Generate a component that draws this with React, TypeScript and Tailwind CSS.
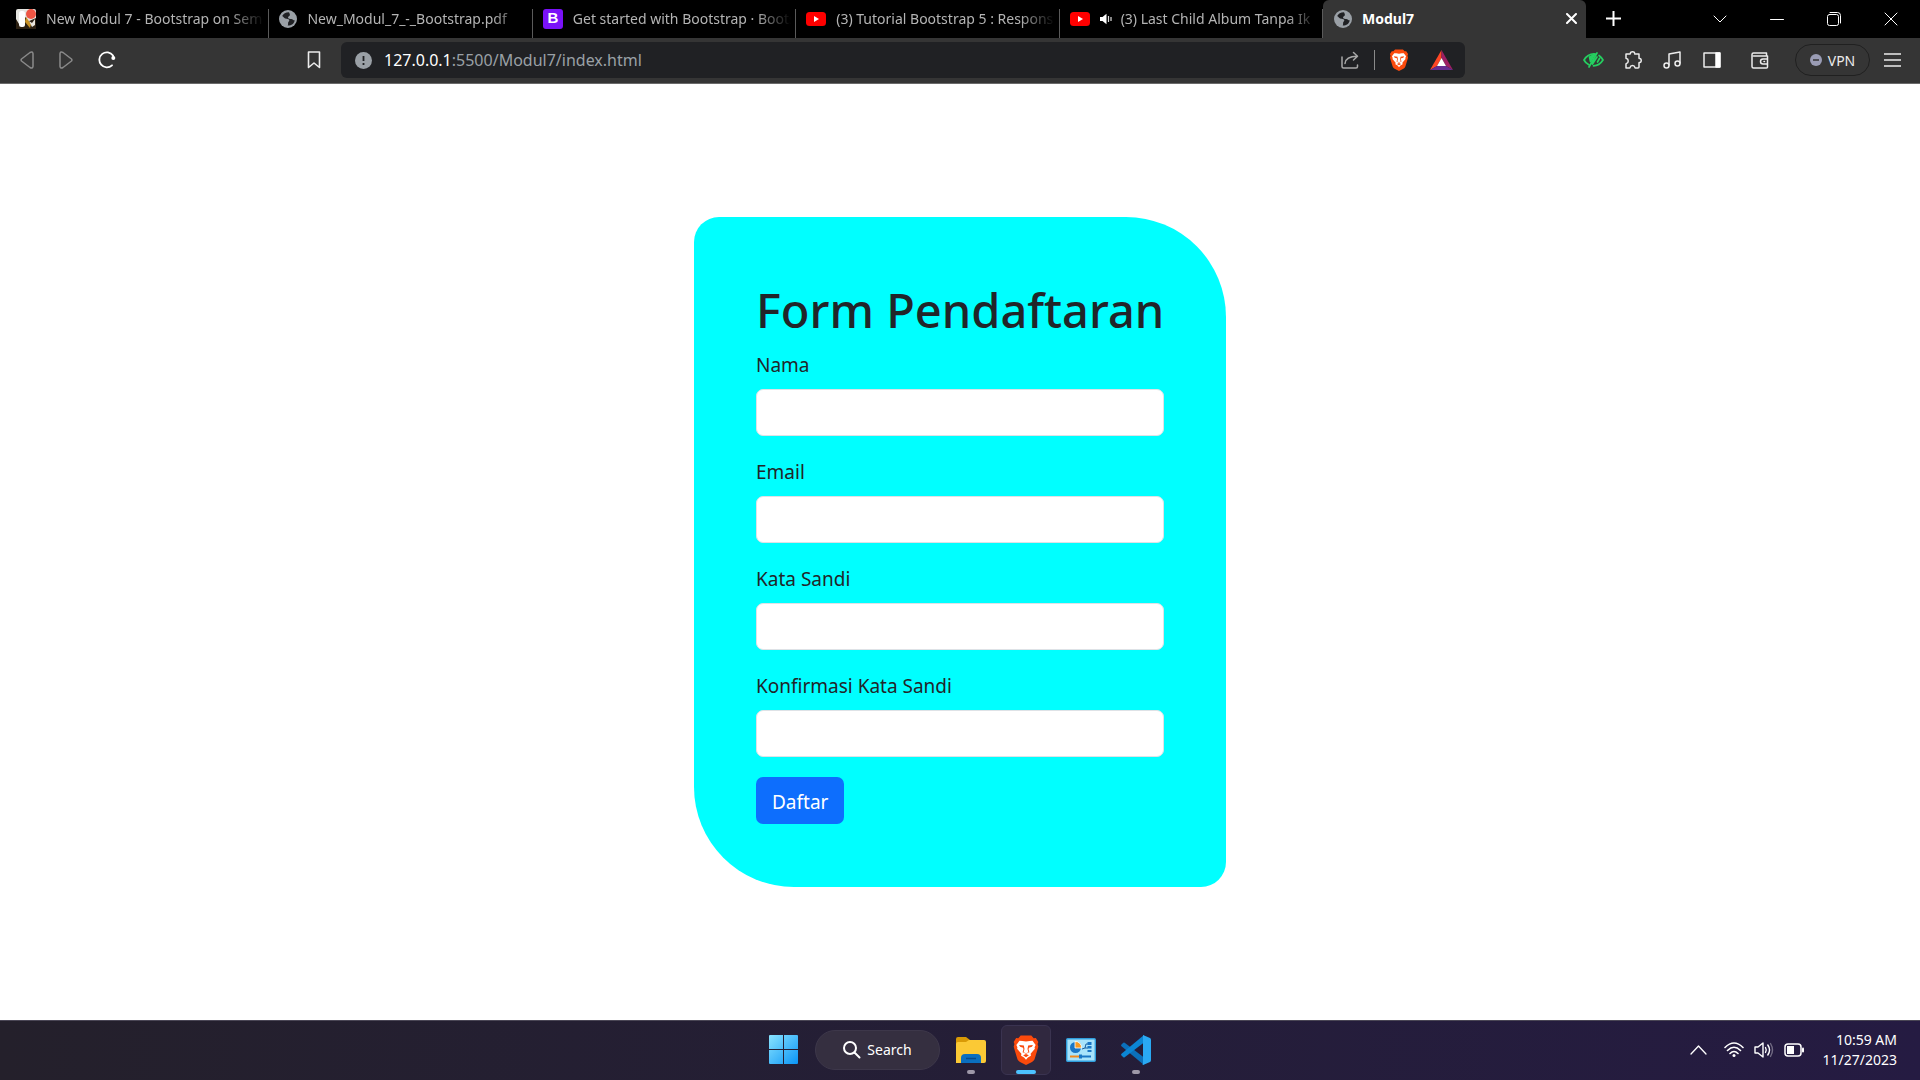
import React from "react";

const font = "font-['Noto_Sans','Open_Sans',sans-serif]";

function Globe() {
  return (
    <svg width="18" height="18" viewBox="0 0 18 18" className="shrink-0">
      <circle cx="9" cy="9" r="9" fill="#9aa0a6" />
      <path d="M10 2.200c-3.600 0-5.500 1.600-6.800 3.800 1.400 1 2.200 2.600 4.400 2.700 1.600.1 2.700.5 2.700 1.800 0 1-1 1.200-1.200 2.200-.1.900.2 1.600-.4 2.900 3.700.1 6.500-2 7-5.400-1.200.1-1.700-.6-2.600-1-.9-.4-2.700 0-3.500-.6-1.200-.9-.2-2.200.6-2.600 1.100-.4.900-1.700-.2-3.800z" fill="#202124" />
    </svg>
  );
}

function YouTube() {
  return (
    <svg width="20" height="14" viewBox="0 0 20 14" className="shrink-0">
      <rect width="20" height="14" rx="3.500" fill="#f00" />
      <path d="M8 4l5 3-5 3z" fill="#fff" />
    </svg>
  );
}

function Lion({ className }: { className: string }) {
  return (
    <svg viewBox="0 0 24 28" className={className}>
      <path d="M7 .5h10l2.200 2.500 2-.2 2.300 3.700-.7 2 .7 2.500-3.300 11c-.5 1.600-1.300 2.400-2.600 3.200L12 28l-5.600-2.800C5.100 24.400 4.300 23.600 3.800 22L.5 11l.7-2.500-.7-2 2.300-3.700 2 .2z" fill="#fb4a0c" />
      <path d="M8.500 5.500l3.500.6 3.500-.6 2.600-.2 2.900 4-1 2.200.3 1.300-4 4.800.3 1.700-2.800 1.700L12 23.200l-1.800-2.200-2.800-1.700.3-1.700-4-4.800.3-1.300-1-2.200 2.900-4z" fill="#fff" />
      <path d="M5.500 9.300l4.500.5.6 3.200-.8 3 2.200 1 2.200-1-.8-3 .6-3.200 4.500-.5-1 1.700-2.800.8-.3 1.700.8 2.500-3.200 1.500L8.800 16l.8-2.500-.3-1.700-2.800-.8zM9.300 19L12 17.800l2.700 1.200L12 20.700z" fill="#fb4a0c" />
    </svg>
  );
}

const stroke = { fill: "none", stroke: "currentColor", strokeLinecap: "round", strokeLinejoin: "round" } as const;

function Tab({ icon, audio, title }: { icon: React.ReactNode; audio?: boolean; title: string }) {
  return (
    <div className="flex h-full min-w-0 flex-1 items-end">
      <button className="flex h-full min-w-0 flex-1 items-center gap-[10px] pb-px pl-[10px] pr-1 text-[#b4b4b4]">
        {icon}
        {audio && (
          <svg width="12" height="12" viewBox="0 0 12 12" className="-mr-px shrink-0">
            <path d="M0 4h2.500L6.500.8v10.400L2.500 8H0z" fill="#fff" />
            <path d="M8.500 3v6M11 4v4" stroke="#ddd" strokeWidth="1.200" />
          </svg>
        )}
        <span className="min-w-0 flex-1 overflow-hidden whitespace-nowrap text-left text-[14px] [mask-image:linear-gradient(to_right,black_84%,transparent)]">
          {title}
        </span>
      </button>
      <span className="h-[29px] w-px shrink-0 bg-[#5a5a5a]" />
    </div>
  );
}

function TabBar() {
  return (
    <header className="flex h-[38px] bg-black">
      <div className="flex min-w-0 flex-1 pl-[6px]">
        <Tab
          title="New Modul 7 - Bootstrap on Sem"
          icon={
            <svg width="20" height="20" viewBox="0 0 20 20" className="shrink-0">
              <rect width="20" height="20" rx="2" fill="#e4e4e0" />
              <path d="M0 10l3 5 7-7 1 5 9-4v11H0z" fill="#2c2012" />
              <path d="M10 8l5 7-1 4-5-6z" fill="#c79024" />
              <path d="M13 12l3 2 3-4v6l-3 2z" fill="#e8e4dc" />
              <rect x="3" y="2" width="6" height="16" rx="2.500" fill="#fff" />
              <circle cx="15" cy="5" r="5" fill="#ee5544" />
            </svg>
          }
        />
        <Tab title="New_Modul_7_-_Bootstrap.pdf" icon={<Globe />} />
        <Tab
          title="Get started with Bootstrap · Boots"
          icon={
            <span className="flex size-5 shrink-0 items-center justify-center rounded-[3px] bg-[#7a12f8] font-['Liberation_Sans',sans-serif] text-[15px] font-bold text-white">
              B
            </span>
          }
        />
        <Tab title="(3) Tutorial Bootstrap 5 : Respons" icon={<YouTube />} />
        <Tab title="(3) Last Child Album Tanpa Ik" audio icon={<YouTube />} />
      </div>
      <div className="flex w-[263px] items-center gap-[10px] rounded-t-md bg-[#353535] pb-px pl-[11px] pr-[9px] text-white">
        <Globe />
        <span className="flex-1 text-[14px] font-bold">Modul7</span>
        <button aria-label="Close tab">
          <svg width="11" height="11" viewBox="0 0 11 11" {...stroke} strokeWidth="2">
            <path d="M1 1l9 9M10 1l-9 9" />
          </svg>
        </button>
      </div>
      <div className="flex w-[334px] items-center pb-px pl-5 pr-px text-white">
        <button aria-label="New tab">
          <svg width="15" height="15" viewBox="0 0 15 15" {...stroke} strokeWidth="2" strokeLinecap="square">
            <path d="M7.500 1v13M1 7.500h13" />
          </svg>
        </button>
        <span className="flex-1" />
        <button aria-label="Search tabs" className="flex w-[57px] justify-center">
          <svg width="14" height="8" viewBox="0 0 14 8" {...stroke}><path d="M1 1l6 6 6-6" /></svg>
        </button>
        <button aria-label="Minimize" className="flex w-[57px] justify-center">
          <svg width="14" height="14" viewBox="0 0 14 14" {...stroke}><path d="M.5 7.500h13" /></svg>
        </button>
        <button aria-label="Restore" className="flex w-[57px] justify-center">
          <svg width="14" height="14" viewBox="0 0 14 14" {...stroke}>
            <rect x=".5" y="2.500" width="11" height="11" rx="2" />
            <path d="M3 .5h7.500a3 3 0 0 1 3 3V11" />
          </svg>
        </button>
        <button aria-label="Close" className="flex w-[57px] justify-center">
          <svg width="14" height="14" viewBox="0 0 14 14" {...stroke}><path d="M1 1l12 12M13 1L1 13" /></svg>
        </button>
      </div>
    </header>
  );
}

function Toolbar() {
  return (
    <nav className="flex h-[46px] items-center border-b border-[#6a6a6a] bg-[#353535] pb-px pl-5 pr-[19px] text-[#ececec]">
      <div className="flex items-center gap-[25px]">
        <button aria-label="Back" className="text-[#8a8a8a]">
          <svg width="14" height="18" viewBox="0 0 14 18" {...stroke} strokeWidth="1.500"><path d="M1.500 8q-.8 1 0 2l8.500 6.500q2.500 1.500 3-1.200V2.700Q12.500 0 10 1.500z" /></svg>
        </button>
        <button aria-label="Forward" className="text-[#8a8a8a]">
          <svg width="14" height="18" viewBox="0 0 14 18" {...stroke} strokeWidth="1.500"><path d="M12.500 8q.8 1 0 2L4 16.500q-2.500 1.500-3-1.200V2.700Q1.500 0 4 1.500z" /></svg>
        </button>
        <button aria-label="Reload" className="text-white">
          <svg width="18" height="18" viewBox="0 0 18 18" {...stroke} strokeWidth="1.800">
            <path d="M14 14.300A7.500 7.500 0 1 1 15 4.500L15.500 7" />
            <circle cx="15.300" cy="7" r="2" fill="currentColor" stroke="none" />
          </svg>
        </button>
      </div>
      <button aria-label="Bookmark" className="ml-[191px] mr-5">
        <svg width="14" height="18" viewBox="0 0 14 18" {...stroke} strokeWidth="1.600"><path d="M1.500 1h11v15.500L7 12l-5.500 4.500z" /></svg>
      </button>
      <div className="flex h-[36px] min-w-0 flex-1 items-center rounded-md bg-[#202124] pl-[14px] pr-3">
        <svg width="17" height="17" viewBox="0 0 17 17" className="mr-3 shrink-0">
          <circle cx="8.500" cy="8.500" r="8.500" fill="#9aa0a6" />
          <path d="M8.500 4v5M8.500 11v2" stroke="#202124" strokeWidth="1.800" />
        </svg>
        <a href="#" className="flex-1 whitespace-nowrap text-[16px] text-[#9aa0a6]">
          <span className="text-white">127.0.0.1</span>:5500/Modul7/index.html
        </a>
        <button aria-label="Share" className="text-[#a8a8a8]">
          <svg width="18" height="18" viewBox="0 0 18 18" {...stroke} strokeWidth="1.500">
            <path d="M1 6v9.500q0 1.500 1.500 1.500H15q1.500 0 1.500-1.500V14M4 12.500C4.500 8 8 5.300 16 5.300M12.500 1.500l4 3.800-4 3.700" />
          </svg>
        </button>
        <span className="ml-[15px] mr-[14px] h-5 w-px bg-[#8a8a8a]" />
        <button aria-label="Brave Shields"><Lion className="h-[22px] w-5" /></button>
        <button aria-label="Brave Rewards" className="ml-[21px]">
          <svg width="23" height="20" viewBox="0 0 23 20">
            <path d="M11.500 0L0 20l7-4 4.500-8z" fill="#ff4724" />
            <path d="M11.500 0L23 20l-7-4-4.500-8z" fill="#9e1f63" />
            <path d="M0 20h23l-7-4H7z" fill="#662d91" />
            <path d="M11.500 8l4.500 8H7z" fill="#fff" />
          </svg>
        </button>
      </div>
      <div className="ml-[118px] flex items-center">
        <button aria-label="Reader eye" className="text-[#25cf60]">
          <svg width="21" height="16" viewBox="0 0 21 16" {...stroke} strokeWidth="1.700">
            <path d="M1 8C4 3 8 1.500 12.500 2M1 8c1 2 2.500 3.500 4.500 4.500M16 3.500C18 5 19.200 6.500 20 8c-2.500 4-5.500 5.800-9.500 5.800M6 15L14 1M9.500 12L14 5M14.500 10l2-3.500" />
            <path d="M6.500 5l5-2.500-4 7z" fill="currentColor" />
          </svg>
        </button>
        <button aria-label="Extensions" className="ml-[19px]">
          <svg width="20" height="18" viewBox="0 0 20 18" {...stroke} strokeWidth="1.500">
            <path d="M3 3h4q.6 0 .4-.5C7.200.2 12 .2 11.600 2.500q-.1.500.5.500H16v4q0 .6.500.500c2.300-.5 2.300 4.500 0 4q-.5-.1-.5.500V16q0 1-1 1h-2.500q-.5 0-.6-.6c-.4-2.500-4.400-2.500-4.800 0q-.1.600-.6.600H3v-4q0-.5.5-.6c2.300-.4 2.300-4.400 0-4.800Q3 7.500 3 7z" />
          </svg>
        </button>
        <button aria-label="Media" className="ml-5">
          <svg width="18" height="18" viewBox="0 0 18 18" {...stroke} strokeWidth="1.500">
            <circle cx="3.500" cy="14.500" r="2.500" /><circle cx="14.500" cy="12.500" r="2.500" /><path d="M6 14V3l11-2v11" />
          </svg>
        </button>
        <button aria-label="Sidebar" className="ml-[22px]">
          <svg width="18" height="16" viewBox="0 0 18 16" {...stroke} strokeWidth="1.500">
            <rect x="1" y="1" width="15.500" height="14" /><path d="M13 1h4v14h-4z" fill="#fff" stroke="#fff" />
          </svg>
        </button>
        <button aria-label="Wallet" className="ml-[30px]">
          <svg width="18" height="17" viewBox="0 0 18 17" {...stroke} strokeWidth="1.500">
            <path d="M15.500 4V1H2.500Q1 1 1 2.500v12Q1 16 2.500 16h13q1 0 1-1V4h-14M16.500 7H12q-2.500 0-2.500 2.500T12 12h4.500M13 9.500h.5" />
          </svg>
        </button>
        <button className="ml-[26px] flex h-8 w-[75px] items-center justify-center gap-[6px] rounded-full border border-[#202020] text-[14px]">
          <svg width="12" height="12" viewBox="0 0 12 12"><circle cx="6" cy="6" r="6" fill="#9a9cb4" /><path d="M3 6h6" stroke="#353535" strokeWidth="1.500" /></svg>
          VPN
        </button>
        <button aria-label="Menu" className="ml-[14px]">
          <svg width="17" height="14" viewBox="0 0 17 14" stroke="currentColor" strokeWidth="1.500"><path d="M0 1h17M0 7h17M0 13h17" /></svg>
        </button>
      </div>
    </nav>
  );
}

const fields = [
  { id: "nama", label: "Nama", type: "text" },
  { id: "email", label: "Email", type: "email" },
  { id: "sandi", label: "Kata Sandi", type: "password" },
  { id: "konfirmasi", label: "Konfirmasi Kata Sandi", type: "password" },
];

function RegisterForm() {
  return (
    <form className="w-full max-w-[532px] rounded-[25px] rounded-bl-[100px] rounded-tr-[100px] bg-[#00ffff] px-[62px] pb-[63px] pt-[62px] text-[#212529]">
      <h1 className="mb-2 whitespace-nowrap text-[47px] font-medium leading-[62px]">Form Pendaftaran</h1>
      {fields.map((f) => (
        <div key={f.id} className="mb-5">
          <label htmlFor={f.id} className="mb-2 block text-[19px] leading-8">{f.label}</label>
          <input id={f.id} type={f.type} className="block h-[47px] w-full rounded-[7px] border border-[#dee2e6] bg-white px-[15px]" />
        </div>
      ))}
      <button type="button" className="block h-[47px] rounded-[7px] bg-[#0d6efd] px-4 pt-[3px] text-[19px] text-white">Daftar</button>
    </form>
  );
}

function TaskIcon({ label, mark, active, children }: { label: string; mark?: string; active?: boolean; children: React.ReactNode }) {
  return (
    <button
      aria-label={label}
      className={
        active
          ? "relative flex h-[50px] w-[50px] items-center justify-center rounded-md border border-[#3a3350] bg-[#30283f]"
          : "relative flex h-[50px] w-[50px] items-center justify-center"
      }
    >
      {children}
      {mark && <span className={mark} />}
    </button>
  );
}

const runningMark = "absolute bottom-px left-1/2 h-1 w-2 -translate-x-1/2 rounded-full bg-[#9e98a8]";
const activeMark = "absolute bottom-0 left-1/2 h-1 w-5 -translate-x-1/2 rounded-full bg-[#4cc2ff]";

function Taskbar() {
  return (
    <footer className="grid h-[60px] grid-cols-[1fr_auto_1fr] items-center border-t border-[#4a4655] bg-linear-to-r from-[#24202b] to-[#251b42] pb-0.5 text-white">
      <span />
      <div className="flex items-center gap-[5px]">
        <TaskIcon label="Start">
          <svg width="30" height="30" viewBox="0 0 30 30">
            <defs>
              <linearGradient id="win" x1="0" y1="0" x2="1" y2="1"><stop stopColor="#8ae4ff" /><stop offset="1" stopColor="#0a94f5" /></linearGradient>
            </defs>
            <path d="M0 1q0-1 1-1h13v14H0zM15 0h13q1 0 1 1v13H15zM0 15h14v14H1q-1 0-1-1zM15 15h14v13q0 1-1 1H15z" fill="url(#win)" />
          </svg>
        </TaskIcon>
        <button className="mx-px flex h-10 w-[125px] items-center justify-center gap-[6px] rounded-full border border-[#3d374a] bg-[#352f40] text-[14px]">
          <svg width="18" height="18" viewBox="0 0 18 18" {...stroke} strokeWidth="2"><circle cx="7" cy="7" r="6" /><path d="M11.500 11.500l5 5" /></svg>
          Search
        </button>
        <TaskIcon label="File Explorer" mark={runningMark}>
          <svg width="30" height="28" viewBox="0 0 30 28">
            <path d="M0 3q0-2 2-2h8l4 3-4 5H0z" fill="#d99a06" />
            <path d="M0 8q0-2 2-2h8l3-2h15q2 0 2 2v19q0 2-2 2H0z" fill="#fbc935" />
            <path d="M5 27v-5q0-4 4-4h12q4 0 4 4v5z" fill="#0a6fc0" />
            <path d="M10 22.500h10" stroke="#054a8c" strokeWidth="1.500" />
          </svg>
        </TaskIcon>
        <TaskIcon label="Brave" mark={activeMark} active><Lion className="h-[30px] w-[26px]" /></TaskIcon>
        <TaskIcon label="Control Panel">
          <svg width="30" height="24" viewBox="0 0 30 24">
            <rect x=".7" y=".7" width="28.600" height="22.600" rx="1" fill="#a7e3fb" stroke="#2f9ddb" strokeWidth="1.400" />
            <circle cx="9.500" cy="9.500" r="5.500" fill="#1976c5" />
            <path d="M9 10V3.500A6 6 0 0 1 15.500 10z" fill="#f59a23" stroke="#fff" strokeWidth=".8" />
            <path d="M16 11l3-1 1-4h2M19 10h3" stroke="#1b5f9e" fill="none" />
            <path d="M21.500 4h4v3h-4zM21.500 8h4v2.500h-4zM21.500 12h4v2h-4z" fill="#1976c5" />
            <path d="M4 18.500h9" stroke="#f08a1d" strokeWidth="2" /><path d="M16 18.500h9" stroke="#1976c5" strokeWidth="2" /><path d="M14.500 16.500v4" stroke="#1976c5" strokeWidth="3" />
          </svg>
        </TaskIcon>
        <TaskIcon label="Visual Studio Code" mark={runningMark}>
          <svg width="30" height="30" viewBox="0 0 30 30">
            <path d="M.5 9.500l1.800-1.800q.7-.5 1.400 0L23 22.500V30L.5 11.200q-.8-.8 0-1.700z" fill="#0b70ba" />
            <path d="M.5 20.500l1.800 1.800q.7.500 1.400 0L23 7.500V0L.5 18.800q-.8.800 0 1.700z" fill="#0b86d4" />
            <path d="M22 0l7 3q1 .5 1 2v20q0 1.500-1 2l-7 3q-1-.5 0-1.500z" fill="#2aa9f3" />
          </svg>
        </TaskIcon>
      </div>
      <div className="flex items-center justify-end pr-[23px]">
        <button aria-label="Hidden icons"><svg width="17" height="10" viewBox="0 0 17 10" {...stroke} strokeWidth="1.300"><path d="M1 9l7.500-8L16 9" /></svg></button>
        <button aria-label="Network and sound" className="ml-[17px] flex items-center gap-[10px]">
          <svg width="20" height="16" viewBox="0 0 20 16" {...stroke} strokeWidth="1.600">
            <path d="M1 5.500Q10-3.500 19 5.500M3.500 8.500q6.500-6.500 13 0M6 11.500q4-4 8 0" /><circle cx="10" cy="13.500" r="1.500" fill="#fff" stroke="none" />
          </svg>
          <svg width="20" height="16" viewBox="0 0 20 16" {...stroke} strokeWidth="1.400">
            <path d="M1 5h3l5-4v14l-5-4H1zM11.500 5.500q1.500 2.500 0 5M13.800 3q3.500 5 0 10" /><path d="M16.500 1.500q4 6.500 0 13" opacity=".35" />
          </svg>
          <svg width="20" height="14" viewBox="0 0 20 14" {...stroke} strokeWidth="1.500">
            <rect x="1" y="1" width="16" height="12" rx="3" /><rect x="3" y="3" width="7" height="8" fill="#fff" stroke="none" /><path d="M19 5.500v3" strokeWidth="2" />
          </svg>
        </button>
        <button className="ml-[19px] text-right text-[14px] leading-5"><span className="block">10:59 AM</span><span className="block">11/27/2023</span></button>
      </div>
    </footer>
  );
}

export default function App() {
  return (
    <div className={`flex min-h-screen flex-col bg-white ${font}`}>
      <TabBar />
      <Toolbar />
      <main className="flex flex-1 items-center justify-center"><RegisterForm /></main>
      <Taskbar />
    </div>
  );
}
